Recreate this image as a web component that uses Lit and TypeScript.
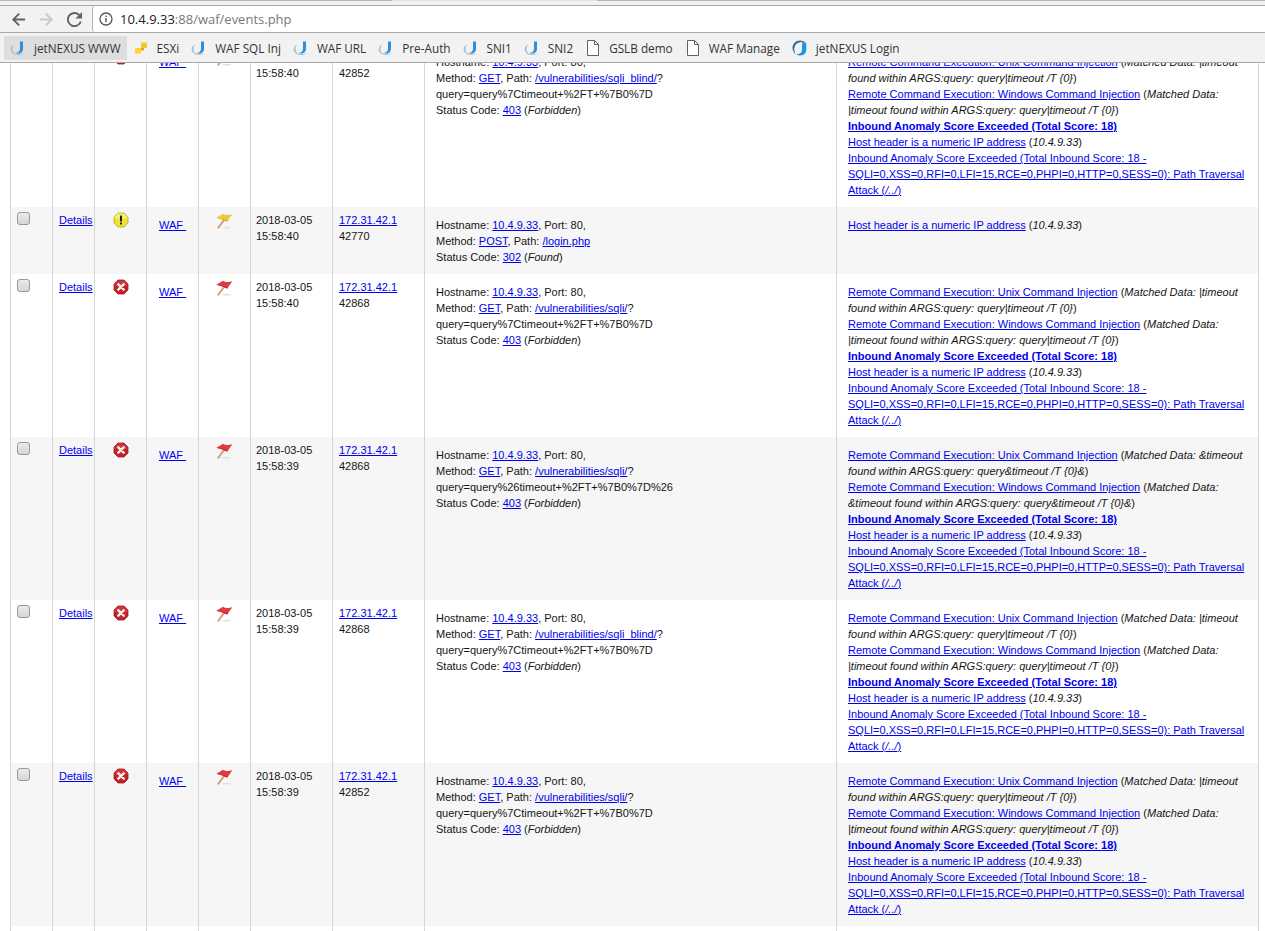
import { LitElement, html, css } from "lit";
import { customElement } from "lit/decorators.js";

interface Row {
  sev: "err" | "warn"; date: string; time: string; port: string;
  method: string; path: string; query?: string; code: string; status: string;
  m?: string; mb?: string; m2?: string; short?: boolean;
}

const pipe = { m: "|timeout", mb: "found within ARGS:query: query|timeout /T {0}", m2: "|timeout found within ARGS:query: query|timeout /T {0}" };
const amp = { m: "&timeout", mb: "found within ARGS:query: query&timeout /T {0}&", m2: "&timeout found within ARGS:query: query&timeout /T {0}&" };
const q = "query=query%7Ctimeout+%2FT+%7B0%7D";

const rows: Row[] = [
  { sev: "err", date: "2018-03-05", time: "15:58:40", port: "42852", method: "GET", path: "/vulnerabilities/sqli_blind/", query: q, code: "403", status: "Forbidden", ...pipe },
  { sev: "warn", date: "2018-03-05", time: "15:58:40", port: "42770", method: "POST", path: "/login.php", code: "302", status: "Found", short: true },
  { sev: "err", date: "2018-03-05", time: "15:58:40", port: "42868", method: "GET", path: "/vulnerabilities/sqli/", query: q, code: "403", status: "Forbidden", ...pipe },
  { sev: "err", date: "2018-03-05", time: "15:58:39", port: "42868", method: "GET", path: "/vulnerabilities/sqli/", query: "query=query%26timeout+%2FT+%7B0%7D%26", code: "403", status: "Forbidden", ...amp },
  { sev: "err", date: "2018-03-05", time: "15:58:39", port: "42868", method: "GET", path: "/vulnerabilities/sqli_blind/", query: q, code: "403", status: "Forbidden", ...pipe },
  { sev: "err", date: "2018-03-05", time: "15:58:39", port: "42852", method: "GET", path: "/vulnerabilities/sqli/", query: q, code: "403", status: "Forbidden", ...pipe },
];

const jet = (big = false) => big
  ? html`<svg class="fav" width="16" height="16" viewBox="0 0 16 16">
      <path d="M8 .6C3.600.6.500 3.800.500 8c0 2.800 1.500 5.200 3.800 6.500C2.600 12.800 2 10.400 2.300 8.200 2.800 4.800 5 2.600 8 2.200Z" fill="#2a6ea8"/>
      <path d="M8 .6c2.500 0 4.800 1 6 2.800l-2 .2C10.800 2.600 9.500 2.200 8 2.200Z" fill="#5b6f80"/>
      <path d="M10 3.200h4.300v6.300c0 3.500-2.400 5.900-5.800 5.900-1.600 0-3-.5-4-1.500 3 .5 5.500-1 5.500-4Z" fill="#1b97ea"/>
    </svg>`
  : html`<svg class="fav" width="16" height="16" viewBox="0 0 16 16">
      <path d="M4.500 4C1.500 5.500 0 8.500 1 11c1 3 4.500 4.500 8 4 2-.3 3.500-1 4.500-2-2.500 1.200-6 1.500-8.500.5C2 12 1.800 7 4.500 4Z" fill="#a4c3d8"/>
      <path d="M10 1.500h3v7c0 3-2 5-5 5-1 0-2-.3-2.500-.8 2.500.3 4.500-1 4.500-4Z" fill="#2a8fdc"/>
    </svg>`;

const esxi = html`<svg class="fav" width="16" height="16" viewBox="0 0 16 16">
  <rect x="8" y="2.500" width="6" height="5.500" rx=".8" fill="#fbc71e"/>
  <rect x="2" y="8" width="6" height="5.500" rx=".8" fill="#fdd23a"/>
  <rect x="8" y="8" width="3" height="2.500" fill="#eaa514"/>
</svg>`;

const page = html`<svg class="fav" width="16" height="16" viewBox="0 0 16 16" fill="none" stroke="#5f6368" stroke-width="1">
  <path d="M2.500.5h7l4 4v11h-11Z" fill="#fff"/><path d="M9.500.5v4h4"/>
</svg>`;

const bookmarks = [
  { t: "jetNEXUS WWW", i: jet(), active: true },
  { t: "ESXi", i: esxi },
  { t: "WAF SQL Inj", i: jet() },
  { t: "WAF URL", i: jet() },
  { t: "Pre-Auth", i: jet() },
  { t: "SNI1", i: jet() },
  { t: "SNI2", i: jet() },
  { t: "GSLB demo", i: page },
  { t: "WAF Manage", i: page },
  { t: "jetNEXUS Login", i: jet(true) },
];

const sevIcon = (s: string) => s === "err"
  ? html`<svg width="16" height="16" viewBox="0 0 16 16">
      <path d="M5 1h6l4 4v6l-4 4H5l-4-4V5Z" fill="#c4202a" stroke="#a51a22" stroke-width=".8" stroke-linejoin="round"/>
      <path d="M5 1.500h6l3.500 3.500v2h-13V5Z" fill="#e04850" opacity=".5"/>
      <path d="M5.300 5.300l5.400 5.400M10.700 5.300l-5.400 5.400" stroke="#f4efe8" stroke-width="2.400" stroke-linecap="round"/>
    </svg>`
  : html`<svg width="16" height="16" viewBox="0 0 16 16">
      <path d="M5 1h6l4 4v6l-4 4H5l-4-4V5Z" fill="#ece238" stroke="#b9a51e" stroke-width=".8" stroke-linejoin="round"/>
      <path d="M5 1.500h6l3.500 3.500v1.500h-13V5Z" fill="#fbf6a0" opacity=".6"/>
      <rect x="7" y="3.500" width="2" height="6" rx=".6" fill="#222"/><rect x="7" y="10.500" width="2" height="2" rx=".6" fill="#222"/>
    </svg>`;

const flag = (s: string) => {
  const [a, b] = s === "err" ? ["#e03a44", "#bd2a32"] : ["#f0c63c", "#d3a226"];
  return html`<svg width="17" height="16" viewBox="0 0 17 16">
    <ellipse cx="10.500" cy="14.800" rx="4.500" ry=".8" fill="#dfdfdf"/>
    <path d="M2.300 14.700L8 7" stroke="#cf9a72" stroke-width="1.900" stroke-linecap="round"/>
    <path d="M.3 4.700L7 .7c2 1.300 5 1.800 9.300.6L11.300 8.500C9 8 8 7 5.700 6.300Z" fill="${a}"/>
    <path d="M.3 4.700L5.700 6.300C8 7 9 8 11.300 8.500l.7-1C9.500 7 7 5 .3 4.700Z" fill="${b}"/>
  </svg>`;
};

@customElement("app-root")
export class AppRoot extends LitElement {
  static styles = css`
    :host { display: block; width: 1265px; height: 931px; overflow: hidden; background: #fff; font-family: "Liberation Sans", Arial, sans-serif; }
    .chrome { height: 63px; box-sizing: border-box; background: #f2f2f2; border-bottom: 1px solid #a9a9a9; display: flex; flex-direction: column; }
    .tabs { height: 6px; box-sizing: border-box; border-bottom: 1px solid #a9a9a9; flex: none; display: flex; }
    .tabs .s { width: 392px; border-top: 1px solid #b4b4b4; }
    .tabs .g { width: 205px; border-top: 1px solid #e4e4e4; }
    .tabs .r { flex: 1; border-top: 1px solid #b4b4b4; }
    .toolbar { height: 26px; flex: none; display: flex; align-items: center; padding-left: 4px; }
    .nav { width: 28px; height: 26px; display: flex; justify-content: center; align-items: center; }
    .omni { box-sizing: border-box; margin-left: 4px; height: 26px; flex: 1; background: #fff; border-left: 1px solid #b4b4b4; border-radius: 3px 0 0 3px; display: flex; align-items: center; padding-left: 6px; font-size: 13px; font-family: "Open Sans", "Noto Sans", sans-serif; gap: 7px; }
    .omni b { font-weight: 400; color: #222; }
    .omni span { color: #777; }
    .bar { flex: 1; display: flex; align-items: center; padding-left: 4px; border-top: 1px solid #a9a9a9; font-family: "Open Sans", "Noto Sans", sans-serif; font-size: 11.75px; color: #333; }
    .bm { display: flex; align-items: center; height: 24px; gap: 8px; padding: 0 6px; }
    .bm.active { background: #dedede; }
    .fav { flex: none; }
    .view { height: 868px; overflow: hidden; }
    table { border-collapse: collapse; margin-left: 10px; width: 1248px; table-layout: fixed; font-size: 11px; line-height: 16px; color: #151515; }
    .c1, .c2 { width: 42px; }
    .c3, .c4, .c5 { width: 52px; }
    .c6 { width: 82px; }
    .c7 { width: 92px; }
    .c8 { width: 412px; }
    .c9 { width: 422px; }
    td { border-left: 1px solid #d6d6d6; border-right: 1px solid #d6d6d6; vertical-align: top; padding: 5px; box-sizing: border-box; }
    tr.alt td { background: #f6f6f6; }
    tr.tail td { height: 20px; padding: 0; }
    a { color: #00e; text-decoration: underline; }
    .ck { padding: 5px 0 0 6px; }
    .box { appearance: none; width: 13px; height: 13px; margin: 0; display: block; box-sizing: border-box; border: 1px solid #999; border-radius: 3px; background: linear-gradient(#eaeaea, #d6d6d6); }
    .sev { padding: 5px 0 0; }
    .sev svg { display: block; margin: 0 auto; }
    .flag { padding-top: 6px; }
    .pad { padding: 10px 11px 9px; }
    .waf { padding-left: 12px; }
    .in6 { padding-left: 6px; padding-right: 0; }
    em { font-style: italic; }
  `;

  firstUpdated() {
    // The page is photographed scrolled: the top of the first row lies above the fold.
    this.renderRoot.querySelector(".view")!.scrollTop = 19;
  }

  private rules(r: Row) {
    if (r.short) return html`<a href="#">Host header is a numeric IP address</a> (<em>10.4.9.33</em>)`;
    return html`<a href="#">Remote Command Execution: Unix Command Injection</a> (<em>Matched Data: ${r.m} ${r.mb}</em>)<br>
      <a href="#">Remote Command Execution: Windows Command Injection</a> (<em>Matched Data: ${r.m2}</em>)<br>
      <a href="#"><strong>Inbound Anomaly Score Exceeded (Total Score: 18)</strong></a><br>
      <a href="#">Host header is a numeric IP address</a> (<em>10.4.9.33</em>)<br>
      <a href="#">Inbound Anomaly Score Exceeded (Total Inbound Score: 18 - SQLI=0,XSS=0,RFI=0,LFI=15,RCE=0,PHPI=0,HTTP=0,SESS=0): Path Traversal Attack (<em>/../</em>)</a>`;
  }

  render() {
    return html`
      <div class="chrome">
        <div class="tabs"><div class="s"></div><div class="g"></div><div class="r"></div></div>
        <div class="toolbar">
          <div class="nav"><svg width="15" height="15" viewBox="0 0 16 16"><path d="M15 7H4.800l4.700-4.700L8 1 1 8l7 7 1.500-1.300L4.800 9H15Z" fill="#5f6368"/></svg></div>
          <div class="nav"><svg width="15" height="15" viewBox="0 0 16 16"><path d="M1 7h10.200L6.500 2.300 8 1l7 7-7 7-1.500-1.300L11.200 9H1Z" fill="#c8c8c8"/></svg></div>
          <div class="nav"><svg width="15" height="15" viewBox="0 0 16 16"><path d="M13.600 2.400A8 8 0 1 0 15.700 10h-2.100a6 6 0 1 1-1.400-6.200L9 7h7V0Z" fill="#5f6368"/></svg></div>
          <div class="omni">
            <svg width="14" height="14" viewBox="0 0 14 14" fill="none"><circle cx="7" cy="7" r="6" stroke="#555" stroke-width="1.300"/><rect x="6.300" y="6" width="1.400" height="4.200" fill="#555"/><rect x="6.300" y="3.600" width="1.400" height="1.400" fill="#555"/></svg>
            <div><b>10.4.9.33</b><span>:88/waf/events.php</span></div>
          </div>
        </div>
        <div class="bar">
          ${bookmarks.map(b => html`<div class="bm ${b.active ? "active" : ""}">${b.i}<span>${b.t}</span></div>`)}
        </div>
      </div>
      <div class="view">
        <table>
          <colgroup>
            <col class="c1"><col class="c2"><col class="c3"><col class="c4"><col class="c5"><col class="c6"><col class="c7"><col class="c8"><col class="c9">
          </colgroup>
          <tbody>
            ${rows.map((r, i) => html`
              <tr class="${i % 2 ? "alt" : ""}">
                <td class="ck"><input class="box" type="checkbox"></td>
                <td class="in6"><a href="#">Details</a></td>
                <td class="sev">${sevIcon(r.sev)}</td>
                <td class="pad waf"><a href="#">WAF&nbsp;</a></td>
                <td class="sev flag">${flag(r.sev)}</td>
                <td>${r.date}<br>${r.time}</td>
                <td class="in6"><a href="#">172.31.42.1</a><br>${r.port}</td>
                <td class="pad">Hostname: <a href="#">10.4.9.33</a>, Port: 80,<br>Method: <a href="#">${r.method}</a>, Path: <a href="#">${r.path}</a>${r.query ? html`?<br>${r.query}` : ""}<br>Status Code: <a href="#">${r.code}</a> (<em>${r.status}</em>)</td>
                <td class="pad">${this.rules(r)}</td>
              </tr>`)}
            <tr class="tail"><td></td><td></td><td></td><td></td><td></td><td></td><td></td><td></td><td></td></tr>
          </tbody>
        </table>
      </div>
    `;
  }
}
